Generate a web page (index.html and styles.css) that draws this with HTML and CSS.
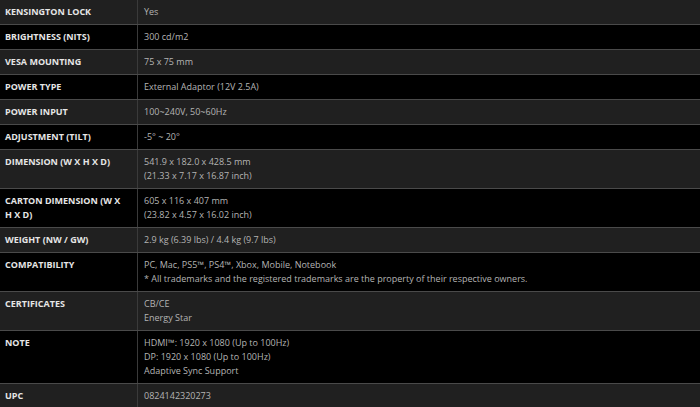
FILE: index.html
```html
<!DOCTYPE html>
<html>
<head>
<meta charset="utf-8">
<link rel="stylesheet" href="styles.css">
</head>
<body>
<div class="specs">
  <div class="row alt"><div class="label">KENSINGTON LOCK</div><div class="value">Yes</div></div>
  <div class="row"><div class="label">BRIGHTNESS (NITS)</div><div class="value">300 cd/m2</div></div>
  <div class="row alt"><div class="label">VESA MOUNTING</div><div class="value">75 x 75 mm</div></div>
  <div class="row"><div class="label">POWER TYPE</div><div class="value">External Adaptor (12V 2.5A)</div></div>
  <div class="row alt"><div class="label">POWER INPUT</div><div class="value">100~240V, 50~60Hz</div></div>
  <div class="row"><div class="label">ADJUSTMENT (TILT)</div><div class="value">-5° ~ 20°</div></div>
  <div class="row alt"><div class="label">DIMENSION (W X H X D)</div><div class="value">541.9 x 182.0 x 428.5 mm<br>(21.33 x 7.17 x 16.87 inch)</div></div>
  <div class="row"><div class="label">CARTON DIMENSION (W X H X D)</div><div class="value">605 x 116 x 407 mm<br>(23.82 x 4.57 x 16.02 inch)</div></div>
  <div class="row alt"><div class="label">WEIGHT (NW / GW)</div><div class="value">2.9 kg (6.39 lbs) / 4.4 kg (9.7 lbs)</div></div>
  <div class="row"><div class="label">COMPATIBILITY</div><div class="value">PC, Mac, PS5™, PS4™, Xbox, Mobile, Notebook<br>* All trademarks and the registered trademarks are the property of their respective owners.</div></div>
  <div class="row alt"><div class="label">CERTIFICATES</div><div class="value">CB/CE<br>Energy Star</div></div>
  <div class="row"><div class="label">NOTE</div><div class="value">HDMI™: 1920 x 1080 (Up to 100Hz)<br>DP: 1920 x 1080 (Up to 100Hz)<br>Adaptive Sync Support</div></div>
  <div class="row alt"><div class="label">UPC</div><div class="value">0824142320273</div></div>
</div>
</body>
</html>
```
FILE: styles.css
```css
html, body {
  margin: 0;
  padding: 0;
  background: #000;
}
.specs {
  display: flex;
  flex-direction: column;
  font-family: "Open Sans", "Noto Sans", sans-serif;
  font-size: 9px;
  line-height: 14px;
}
.row {
  display: grid;
  grid-template-columns: 138px 1fr;
  background: #000;
  border-bottom: 1px solid #4a4a4a;
}
.row.alt {
  background: #202020;
}
.label {
  padding: 5px 8px 5px 5px;
  font-weight: 700;
  color: #e6e6e6;
  border-right: 1px solid #3a3a3a;
}
.value {
  padding: 5px 6px;
  color: #b4b4b4;
}
```
